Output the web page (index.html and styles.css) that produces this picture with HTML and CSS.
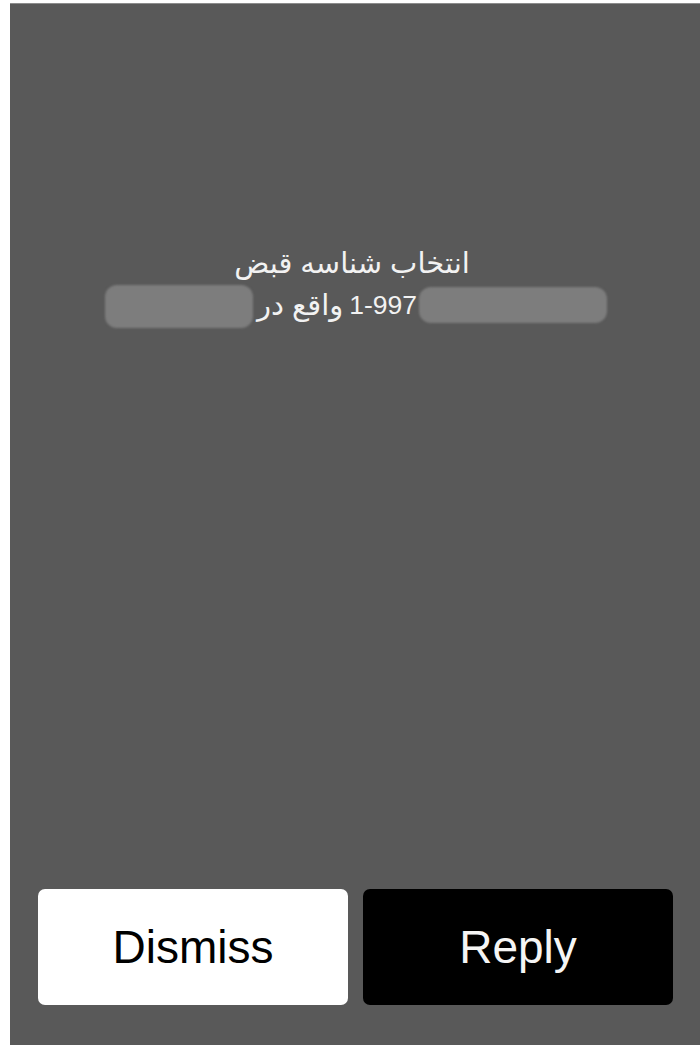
FILE: index.html
```html
<!DOCTYPE html>
<html lang="fa">
<head>
<meta charset="utf-8">
<title>Notification</title>
<link rel="stylesheet" href="styles.css">
</head>
<body>
<div class="panel">
  <div class="message">
    <div class="line1" dir="rtl">انتخاب شناسه قبض</div>
    <div class="line2">
      <span class="pill pill-left"></span>
      <span class="word" dir="rtl">واقع در</span>
      <span class="num">1-997</span>
      <span class="pill pill-right"></span>
    </div>
  </div>
  <div class="actions">
    <div class="btn btn-dismiss">Dismiss</div>
    <div class="btn btn-reply">Reply</div>
  </div>
</div>
</body>
</html>
```
FILE: styles.css
```css
html, body {
  margin: 0;
  padding: 0;
  background: #ffffff;
}
body {
  width: 700px;
  height: 1062px;
  font-family: "Liberation Sans", "DejaVu Sans", sans-serif;
}
.panel {
  margin: 3px 0 0 10px;
  width: 690px;
  height: 1042px;
  background: #595959;
  border-top: 1px solid #8c8c8c;
  box-sizing: border-box;
  display: flex;
  flex-direction: column;
}
.message {
  padding-top: 238px;
  color: #f2f2f2;
  font-size: 26px;
}
.line1 {
  height: 42px;
  line-height: 42px;
  text-align: center;
  font-size: 29px;
  padding-right: 6px;
}
.line2 {
  height: 42px;
  display: flex;
  justify-content: center;
  align-items: center;
  padding-left: 2px;
}
.word {
  margin-left: 4px;
  line-height: 42px;
  font-size: 29px;
}
.num {
  margin-left: 6px;
  line-height: 42px;
  font-size: 26.5px;
}
.pill {
  display: block;
  background: #7d7d7d;
  border-radius: 12px;
  filter: blur(1px);
}
.pill-left {
  width: 148px;
  height: 43px;
  margin-top: 2px;
}
.pill-right {
  width: 188px;
  height: 36px;
  margin-left: 2px;
}
.actions {
  margin-top: auto;
  padding: 0 27px 40px 28px;
  display: flex;
  gap: 15px;
}
.btn {
  width: 310px;
  height: 116px;
  border-radius: 7px;
  display: flex;
  align-items: center;
  justify-content: center;
  font-size: 46px;
  font-family: "Liberation Sans", sans-serif;
}
.btn-dismiss {
  background: #ffffff;
  color: #000000;
}
.btn-reply {
  background: #000000;
  color: #f5f5f5;
}
```
